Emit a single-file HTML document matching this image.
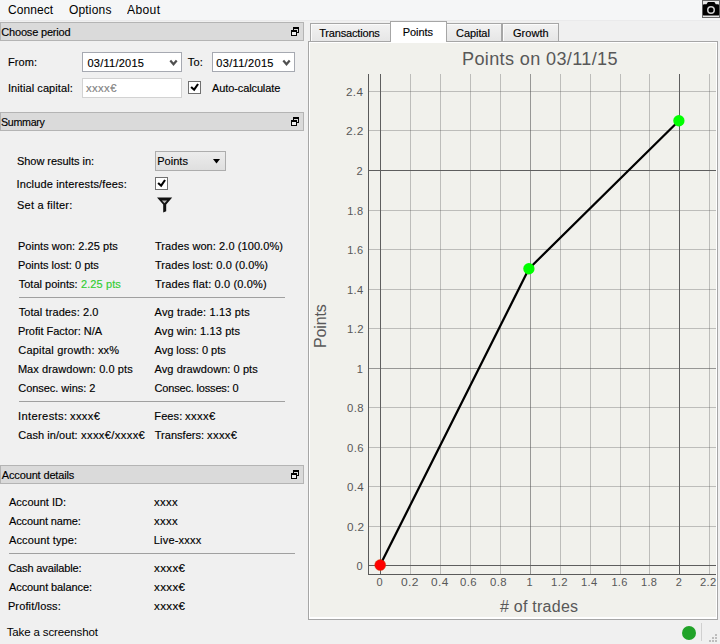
<!DOCTYPE html>
<html><head><meta charset="utf-8"><title>Trading report</title>
<style>
html,body{margin:0;padding:0;}
body{width:720px;height:644px;overflow:hidden;background:#f0f0f0;position:relative;font-family:"Liberation Sans", "DejaVu Sans", sans-serif;}
.t{position:absolute;white-space:pre;line-height:16px;font-family:"Liberation Sans", "DejaVu Sans", sans-serif;-webkit-text-stroke:0.15px;}
.n{-webkit-text-stroke:0;}
</style></head><body>
<div style="position:absolute;left:0px;top:0px;width:720px;height:20px;background:#f5f6f7;"></div>
<div style="position:absolute;left:0px;top:20px;width:720px;height:1px;background:#eaeaeb;"></div>
<svg style="position:absolute;left:702px;top:0" width="18" height="18" viewBox="0 0 18 18">
<rect x="0.5" y="0.5" width="17" height="17" fill="#e6e6e6" stroke="#666"/>
<path d="M0.9 5.4 Q0.9 4.2 2.1 4.2 H4.5 L5.9 2.1 H12.4 L13.8 4.2 H15.9 Q17.1 4.2 17.1 5.4 V14.4 Q17.1 15.6 15.9 15.6 H2.1 Q0.9 15.6 0.9 14.4 Z" fill="#000"/>
<circle cx="9" cy="10" r="3.25" fill="none" stroke="#d0d0d0" stroke-width="1.5"/>
</svg>
<div style="position:absolute;left:0px;top:22px;width:304px;height:19px;box-sizing:border-box;background:#dadada;border:1px solid #b4b4b4;"></div>
<svg style="position:absolute;left:290px;top:26px" width="11" height="11" viewBox="0 0 11 11" shape-rendering="crispEdges">
<rect x="3" y="1" width="6" height="6" fill="#000"/>
<rect x="4" y="3" width="4" height="3" fill="#dadada"/>
<rect x="1" y="4" width="6" height="6" fill="#000"/>
<rect x="2" y="6" width="4" height="3" fill="#ececec"/>
</svg>
<div style="position:absolute;left:0px;top:112px;width:304px;height:19px;box-sizing:border-box;background:#dadada;border:1px solid #b4b4b4;"></div>
<svg style="position:absolute;left:290px;top:116px" width="11" height="11" viewBox="0 0 11 11" shape-rendering="crispEdges">
<rect x="3" y="1" width="6" height="6" fill="#000"/>
<rect x="4" y="3" width="4" height="3" fill="#dadada"/>
<rect x="1" y="4" width="6" height="6" fill="#000"/>
<rect x="2" y="6" width="4" height="3" fill="#ececec"/>
</svg>
<div style="position:absolute;left:0px;top:465px;width:304px;height:19px;box-sizing:border-box;background:#dadada;border:1px solid #b4b4b4;"></div>
<svg style="position:absolute;left:290px;top:469px" width="11" height="11" viewBox="0 0 11 11" shape-rendering="crispEdges">
<rect x="3" y="1" width="6" height="6" fill="#000"/>
<rect x="4" y="3" width="4" height="3" fill="#dadada"/>
<rect x="1" y="4" width="6" height="6" fill="#000"/>
<rect x="2" y="6" width="4" height="3" fill="#ececec"/>
</svg>
<div style="position:absolute;left:82px;top:52px;width:100px;height:20px;box-sizing:border-box;background:#fff;border:1px solid #a6a9b1;"></div>
<svg style="position:absolute;left:169px;top:59px" width="9" height="8" viewBox="0 0 9 8"><path d="M1.3 1.5 L4.5 5.2 L7.7 1.5" fill="none" stroke="#505050" stroke-width="2.2"/></svg>
<div style="position:absolute;left:212px;top:52px;width:83px;height:20px;box-sizing:border-box;background:#fff;border:1px solid #a6a9b1;"></div>
<svg style="position:absolute;left:282px;top:59px" width="9" height="8" viewBox="0 0 9 8"><path d="M1.3 1.5 L4.5 5.2 L7.7 1.5" fill="none" stroke="#505050" stroke-width="2.2"/></svg>
<div style="position:absolute;left:82px;top:78px;width:100px;height:20px;box-sizing:border-box;background:#fff;border:1px solid #d2d2d2;"></div>
<div style="position:absolute;left:188px;top:81px;width:13px;height:13px;box-sizing:border-box;background:#fff;border:1px solid #707070;"></div>
<svg style="position:absolute;left:188px;top:81px" width="13" height="13" viewBox="0 0 13 13"><path d="M3.1 5.9 L6.15 8.7 L10.05 3.0" fill="none" stroke="#000" stroke-width="2.1"/></svg>
<div style="position:absolute;left:155px;top:151px;width:71px;height:20px;box-sizing:border-box;background:linear-gradient(#ececec,#dfdfdf);border:1px solid #adadad;"></div>
<svg style="position:absolute;left:213px;top:159px" width="7" height="5" viewBox="0 0 7 5"><path d="M0 0 H7 L3.5 4.4 Z" fill="#000"/></svg>
<div style="position:absolute;left:155px;top:177px;width:13px;height:13px;box-sizing:border-box;background:#fff;border:1px solid #707070;"></div>
<svg style="position:absolute;left:155px;top:177px" width="13" height="13" viewBox="0 0 13 13"><path d="M3.1 5.9 L6.15 8.7 L10.05 3.0" fill="none" stroke="#000" stroke-width="2.1"/></svg>
<svg style="position:absolute;left:156px;top:196px" width="18" height="18" viewBox="0 0 18 18"><path d="M1 1.4 H16.2 L10.2 8.6 V15.2 L7.2 16.6 V8.6 Z" fill="#111"/><path d="M5.9 4.4 H11.1 L8.5 7.2 Z" fill="#b8b8b8"/></svg>
<div style="position:absolute;left:19px;top:297px;width:266px;height:1px;background:#a0a0a0;"></div>
<div style="position:absolute;left:19px;top:401px;width:266px;height:1px;background:#a0a0a0;"></div>
<div style="position:absolute;left:9px;top:553px;width:286px;height:1px;background:#a0a0a0;"></div>
<div style="position:absolute;left:682px;top:626px;width:14px;height:14px;background:#21a329;border-radius:50%;"></div>
<div style="position:absolute;left:701px;top:623px;width:1px;height:18px;background:#d0d0d0;"></div>
<div style="position:absolute;left:715px;top:634px;width:2px;height:2px;background:#bdbdbd;"></div>
<div style="position:absolute;left:712px;top:637px;width:2px;height:2px;background:#bdbdbd;"></div>
<div style="position:absolute;left:715px;top:637px;width:2px;height:2px;background:#bdbdbd;"></div>
<div style="position:absolute;left:709px;top:640px;width:2px;height:2px;background:#bdbdbd;"></div>
<div style="position:absolute;left:712px;top:640px;width:2px;height:2px;background:#bdbdbd;"></div>
<div style="position:absolute;left:715px;top:640px;width:2px;height:2px;background:#bdbdbd;"></div>
<div style="position:absolute;left:308px;top:41px;width:410px;height:579px;box-sizing:border-box;background:#f1f1ec;border:1px solid #a6a6a6;box-shadow:inset 1px 1px 0 #fff, inset -1px -2px 0 #fff;"></div>
<div style="position:absolute;left:310px;top:23px;width:82px;height:18px;box-sizing:border-box;background:linear-gradient(#f2f2f2,#e6e6e6);border:1px solid #a6a6a6;border-bottom:none;box-shadow:inset 1px 1px 0 #fbfbfb;"></div>
<div style="position:absolute;left:445px;top:23px;width:57px;height:18px;box-sizing:border-box;background:linear-gradient(#f2f2f2,#e6e6e6);border:1px solid #a6a6a6;border-bottom:none;box-shadow:inset 1px 1px 0 #fbfbfb;"></div>
<div style="position:absolute;left:502px;top:23px;width:57px;height:18px;box-sizing:border-box;background:linear-gradient(#f2f2f2,#e6e6e6);border:1px solid #a6a6a6;border-bottom:none;box-shadow:inset 1px 1px 0 #fbfbfb;"></div>
<div style="position:absolute;left:390px;top:21px;width:57px;height:20px;box-sizing:border-box;background:#fff;border:1px solid #a6a6a6;border-bottom:none;"></div>
<div style="position:absolute;left:391px;top:41px;width:55px;height:1px;background:#fff;"></div>
<svg style="position:absolute;left:0;top:0" width="720" height="644" viewBox="0 0 720 644">
<g shape-rendering="crispEdges" stroke-width="1">
<line x1="410.5" y1="74" x2="410.5" y2="575" stroke="#505050" stroke-opacity="0.32"/>
<line x1="440.5" y1="74" x2="440.5" y2="575" stroke="#505050" stroke-opacity="0.32"/>
<line x1="470.5" y1="74" x2="470.5" y2="575" stroke="#505050" stroke-opacity="0.32"/>
<line x1="500.5" y1="74" x2="500.5" y2="575" stroke="#505050" stroke-opacity="0.32"/>
<line x1="530.5" y1="74" x2="530.5" y2="575" stroke="#505050" stroke-opacity="0.56"/>
<line x1="560.5" y1="74" x2="560.5" y2="575" stroke="#505050" stroke-opacity="0.32"/>
<line x1="590.5" y1="74" x2="590.5" y2="575" stroke="#505050" stroke-opacity="0.32"/>
<line x1="620.5" y1="74" x2="620.5" y2="575" stroke="#505050" stroke-opacity="0.32"/>
<line x1="649.5" y1="74" x2="649.5" y2="575" stroke="#505050" stroke-opacity="0.32"/>
<line x1="709.5" y1="74" x2="709.5" y2="575" stroke="#505050" stroke-opacity="0.32"/>
<line x1="368" y1="526.5" x2="716" y2="526.5" stroke="#505050" stroke-opacity="0.32"/>
<line x1="368" y1="486.5" x2="716" y2="486.5" stroke="#505050" stroke-opacity="0.32"/>
<line x1="368" y1="447.5" x2="716" y2="447.5" stroke="#505050" stroke-opacity="0.32"/>
<line x1="368" y1="407.5" x2="716" y2="407.5" stroke="#505050" stroke-opacity="0.32"/>
<line x1="368" y1="368.5" x2="716" y2="368.5" stroke="#505050" stroke-opacity="0.56"/>
<line x1="368" y1="328.5" x2="716" y2="328.5" stroke="#505050" stroke-opacity="0.32"/>
<line x1="368" y1="289.5" x2="716" y2="289.5" stroke="#505050" stroke-opacity="0.32"/>
<line x1="368" y1="249.5" x2="716" y2="249.5" stroke="#505050" stroke-opacity="0.32"/>
<line x1="368" y1="210.5" x2="716" y2="210.5" stroke="#505050" stroke-opacity="0.32"/>
<line x1="368" y1="130.5" x2="716" y2="130.5" stroke="#505050" stroke-opacity="0.32"/>
<line x1="368" y1="91.5" x2="716" y2="91.5" stroke="#505050" stroke-opacity="0.32"/>
<line x1="380.5" y1="74" x2="380.5" y2="575" stroke="#5e5e5e"/>
<line x1="368" y1="565.5" x2="716" y2="565.5" stroke="#5e5e5e"/>
<line x1="679.5" y1="74" x2="679.5" y2="575" stroke="#5e5e5e"/>
<line x1="368" y1="170.5" x2="716" y2="170.5" stroke="#5e5e5e"/>
<line x1="368.5" y1="74" x2="368.5" y2="575" stroke="#5a5a5a"/>
<line x1="368" y1="574.5" x2="716" y2="574.5" stroke="#5a5a5a"/>
</g>
<polyline points="380.2,565.05 528.9,268.75 678.9,120.75" fill="none" stroke="#000" stroke-width="2.25" stroke-linejoin="round"/>
<circle cx="380.2" cy="565.05" r="5.5" fill="#f00" stroke="#c04000" stroke-width="0.4"/>
<circle cx="528.9" cy="268.75" r="5.65" fill="#0f0"/>
<circle cx="678.9" cy="120.75" r="5.65" fill="#0f0"/>
</svg>
<div class="t n" style="left:7.88px;top:1.84px;font-size:12px;color:#000;line-height:16px;letter-spacing:0.100px;">Connect</div>
<div class="t n" style="left:68.88px;top:1.84px;font-size:12px;color:#000;line-height:16px;letter-spacing:0.208px;">Options</div>
<div class="t n" style="left:127.20px;top:1.84px;font-size:12px;color:#000;line-height:16px;letter-spacing:0.350px;transform-origin:0 0;transform:scaleX(1.0077);">About</div>
<div class="t" style="left:1.25px;top:24.19px;font-size:11px;color:#000;line-height:16px;letter-spacing:-0.177px;">Choose period</div>
<div class="t" style="left:1.11px;top:114.19px;font-size:11px;color:#000;line-height:16px;letter-spacing:-0.300px;transform-origin:0 0;transform:scaleX(0.9709);">Summary</div>
<div class="t" style="left:1.80px;top:467.19px;font-size:11px;color:#000;line-height:16px;letter-spacing:-0.146px;">Account details</div>
<div class="t" style="left:8.03px;top:54.19px;font-size:11px;color:#000;line-height:16px;letter-spacing:0.081px;">From:</div>
<div class="t" style="left:187.85px;top:54.19px;font-size:11px;color:#000;line-height:16px;letter-spacing:0.112px;">To:</div>
<div class="t" style="left:87.42px;top:55.19px;font-size:11px;color:#000;line-height:16px;letter-spacing:0.258px;">03/11/2015</div>
<div class="t" style="left:216.22px;top:55.19px;font-size:11px;color:#000;line-height:16px;letter-spacing:0.336px;">03/11/2015</div>
<div class="t" style="left:7.90px;top:80.19px;font-size:11px;color:#000;line-height:16px;letter-spacing:0.085px;">Initial capital:</div>
<div class="t" style="left:85.67px;top:80.19px;font-size:11px;color:#838383;line-height:16px;letter-spacing:0.350px;transform-origin:0 0;transform:scaleX(1.0316);">xxxx€</div>
<div class="t" style="left:212.10px;top:80.19px;font-size:11px;color:#000;line-height:16px;letter-spacing:-0.119px;">Auto-calculate</div>
<div class="t" style="left:17.00px;top:153.19px;font-size:11px;color:#000;line-height:16px;letter-spacing:-0.042px;">Show results in:</div>
<div class="t" style="left:157.22px;top:153.19px;font-size:11px;color:#000;line-height:16px;letter-spacing:0.030px;">Points</div>
<div class="t" style="left:16.50px;top:176.19px;font-size:11px;color:#000;line-height:16px;letter-spacing:0.148px;">Include interests/fees:</div>
<div class="t" style="left:17.00px;top:197.19px;font-size:11px;color:#000;line-height:16px;letter-spacing:0.219px;">Set a filter:</div>
<div class="t" style="left:17.88px;top:238.19px;font-size:11px;color:#000;line-height:16px;letter-spacing:0.042px;">Points won: 2.25 pts</div>
<div class="t" style="left:154.95px;top:238.19px;font-size:11px;color:#000;line-height:16px;letter-spacing:0.080px;">Trades won: 2.0 (100.0%)</div>
<div class="t" style="left:17.88px;top:257.19px;font-size:11px;color:#000;line-height:16px;letter-spacing:0.015px;">Points lost: 0 pts</div>
<div class="t" style="left:154.95px;top:257.19px;font-size:11px;color:#000;line-height:16px;letter-spacing:0.101px;">Trades lost: 0.0 (0.0%)</div>
<div class="t" style="left:18.65px;top:276.19px;font-size:11px;color:#000;line-height:16px;letter-spacing:0.025px;">Total points: </div>
<div class="t" style="left:81.00px;top:276.19px;font-size:11px;color:#32cd32;line-height:16px;letter-spacing:0.093px;">2.25 pts</div>
<div class="t" style="left:154.95px;top:276.19px;font-size:11px;color:#000;line-height:16px;letter-spacing:0.150px;">Trades flat: 0.0 (0.0%)</div>
<div class="t" style="left:18.65px;top:304.19px;font-size:11px;color:#000;line-height:16px;letter-spacing:0.098px;">Total trades: 2.0</div>
<div class="t" style="left:154.60px;top:304.19px;font-size:11px;color:#000;line-height:16px;letter-spacing:0.169px;">Avg trade: 1.13 pts</div>
<div class="t" style="left:17.88px;top:323.19px;font-size:11px;color:#000;line-height:16px;letter-spacing:-0.009px;">Profit Factor: N/A</div>
<div class="t" style="left:154.60px;top:323.19px;font-size:11px;color:#000;line-height:16px;letter-spacing:0.117px;">Avg win: 1.13 pts</div>
<div class="t" style="left:18.25px;top:342.19px;font-size:11px;color:#000;line-height:16px;letter-spacing:0.201px;">Capital growth: xx%</div>
<div class="t" style="left:154.60px;top:342.19px;font-size:11px;color:#000;line-height:16px;letter-spacing:-0.014px;">Avg loss: 0 pts</div>
<div class="t" style="left:17.88px;top:361.19px;font-size:11px;color:#000;line-height:16px;letter-spacing:0.084px;">Max drawdown: 0.0 pts</div>
<div class="t" style="left:154.60px;top:361.19px;font-size:11px;color:#000;line-height:16px;letter-spacing:0.067px;">Avg drawdown: 0 pts</div>
<div class="t" style="left:18.25px;top:380.19px;font-size:11px;color:#000;line-height:16px;letter-spacing:-0.041px;">Consec. wins: 2</div>
<div class="t" style="left:154.50px;top:380.19px;font-size:11px;color:#000;line-height:16px;letter-spacing:-0.173px;">Consec. losses: 0</div>
<div class="t" style="left:17.74px;top:408.19px;font-size:11px;color:#000;line-height:16px;letter-spacing:0.350px;transform-origin:0 0;transform:scaleX(1.0140);">Interests:</div>
<div class="t" style="left:70.27px;top:408.19px;font-size:11px;color:#000;line-height:16px;letter-spacing:0.350px;transform-origin:0 0;transform:scaleX(1.0111);">xxxx€</div>
<div class="t" style="left:154.32px;top:408.19px;font-size:11px;color:#000;line-height:16px;letter-spacing:0.106px;">Fees:</div>
<div class="t" style="left:184.87px;top:408.19px;font-size:11px;color:#000;line-height:16px;letter-spacing:0.350px;transform-origin:0 0;transform:scaleX(1.0248);">xxxx€</div>
<div class="t" style="left:18.25px;top:427.19px;font-size:11px;color:#000;line-height:16px;letter-spacing:0.064px;">Cash in/out:</div>
<div class="t" style="left:81.37px;top:427.19px;font-size:11px;color:#000;line-height:16px;letter-spacing:0.350px;transform-origin:0 0;transform:scaleX(1.0160);">xxxx€/xxxx€</div>
<div class="t" style="left:154.75px;top:427.19px;font-size:11px;color:#000;line-height:16px;letter-spacing:0.025px;">Transfers:</div>
<div class="t" style="left:207.17px;top:427.19px;font-size:11px;color:#000;line-height:16px;letter-spacing:0.350px;transform-origin:0 0;transform:scaleX(1.0179);">xxxx€</div>
<div class="t" style="left:9.00px;top:494.19px;font-size:11px;color:#000;line-height:16px;letter-spacing:0.013px;">Account ID:</div>
<div class="t" style="left:154.47px;top:494.19px;font-size:11px;color:#000;line-height:16px;letter-spacing:0.350px;transform-origin:0 0;transform:scaleX(1.0307);">xxxx</div>
<div class="t" style="left:9.00px;top:513.19px;font-size:11px;color:#000;line-height:16px;letter-spacing:-0.131px;">Account name:</div>
<div class="t" style="left:154.47px;top:513.19px;font-size:11px;color:#000;line-height:16px;letter-spacing:0.350px;transform-origin:0 0;transform:scaleX(1.0307);">xxxx</div>
<div class="t" style="left:9.00px;top:532.19px;font-size:11px;color:#000;line-height:16px;letter-spacing:0.115px;">Account type:</div>
<div class="t" style="left:153.72px;top:532.19px;font-size:11px;color:#000;line-height:16px;letter-spacing:0.206px;">Live-xxxx</div>
<div class="t" style="left:8.25px;top:560.19px;font-size:11px;color:#000;line-height:16px;letter-spacing:-0.136px;">Cash available:</div>
<div class="t" style="left:154.47px;top:560.19px;font-size:11px;color:#000;line-height:16px;letter-spacing:0.350px;transform-origin:0 0;transform:scaleX(1.0521);">xxxx€</div>
<div class="t" style="left:9.00px;top:579.19px;font-size:11px;color:#000;line-height:16px;letter-spacing:-0.092px;">Account balance:</div>
<div class="t" style="left:154.47px;top:579.19px;font-size:11px;color:#000;line-height:16px;letter-spacing:0.350px;transform-origin:0 0;transform:scaleX(1.0521);">xxxx€</div>
<div class="t" style="left:7.88px;top:598.19px;font-size:11px;color:#000;line-height:16px;letter-spacing:0.141px;">Profit/loss:</div>
<div class="t" style="left:154.47px;top:598.19px;font-size:11px;color:#000;line-height:16px;letter-spacing:0.350px;transform-origin:0 0;transform:scaleX(1.0521);">xxxx€</div>
<div class="t n" style="left:6.65px;top:624.02px;font-size:11.5px;color:#000;line-height:16px;letter-spacing:-0.125px;">Take a screenshot</div>
<div class="t" style="left:319.15px;top:25.19px;font-size:11px;color:#000;line-height:16px;letter-spacing:-0.170px;">Transactions</div>
<div class="t" style="left:402.73px;top:24.19px;font-size:11px;color:#000;line-height:16px;letter-spacing:-0.070px;">Points</div>
<div class="t" style="left:456.10px;top:25.19px;font-size:11px;color:#000;line-height:16px;letter-spacing:-0.083px;">Capital</div>
<div class="t" style="left:513.00px;top:25.19px;font-size:11px;color:#000;line-height:16px;letter-spacing:0.050px;">Growth</div>
<div class="t n" style="left:462.24px;top:46.76px;font-size:18px;color:#585858;line-height:24px;letter-spacing:0.350px;transform-origin:0 0;transform:scaleX(1.0052);">Points on 03/11/15</div>
<div class="t n" style="left:499.88px;top:594.96px;font-size:16px;color:#585858;line-height:24px;letter-spacing:0.263px;"># of trades</div>
<div class="t n" style="left:376.52px;top:574.19px;font-size:11px;color:#585858;line-height:16px;">0</div>
<div class="t n" style="left:401.19px;top:574.19px;font-size:11px;color:#585858;line-height:16px;letter-spacing:0.350px;transform-origin:0 0;transform:scaleX(1.0945);">0.2</div>
<div class="t n" style="left:431.20px;top:574.19px;font-size:11px;color:#585858;line-height:16px;letter-spacing:0.350px;transform-origin:0 0;transform:scaleX(1.0767);">0.4</div>
<div class="t n" style="left:460.21px;top:574.19px;font-size:11px;color:#585858;line-height:16px;letter-spacing:0.350px;transform-origin:0 0;transform:scaleX(1.0296);">0.6</div>
<div class="t n" style="left:490.21px;top:574.19px;font-size:11px;color:#585858;line-height:16px;letter-spacing:0.350px;transform-origin:0 0;transform:scaleX(1.0296);">0.8</div>
<div class="t n" style="left:526.38px;top:574.19px;font-size:11px;color:#585858;line-height:16px;">1</div>
<div class="t n" style="left:551.35px;top:574.19px;font-size:11px;color:#585858;line-height:16px;letter-spacing:0.350px;transform-origin:0 0;transform:scaleX(1.0292);">1.2</div>
<div class="t n" style="left:581.36px;top:574.19px;font-size:11px;color:#585858;line-height:16px;letter-spacing:0.350px;transform-origin:0 0;transform:scaleX(1.0118);">1.4</div>
<div class="t n" style="left:611.38px;top:574.19px;font-size:11px;color:#585858;line-height:16px;letter-spacing:0.325px;">1.6</div>
<div class="t n" style="left:641.02px;top:574.19px;font-size:11px;color:#585858;line-height:16px;letter-spacing:0.300px;">1.8</div>
<div class="t n" style="left:675.75px;top:574.19px;font-size:11px;color:#585858;line-height:16px;">2</div>
<div class="t n" style="left:700.49px;top:574.19px;font-size:11px;color:#585858;line-height:16px;letter-spacing:0.350px;transform-origin:0 0;transform:scaleX(1.0201);">2.2</div>
<div class="t n" style="left:356.43px;top:558.19px;font-size:11px;color:#585858;line-height:16px;">0</div>
<div class="t n" style="left:346.60px;top:519.19px;font-size:11px;color:#585858;line-height:16px;letter-spacing:0.350px;transform-origin:0 0;transform:scaleX(1.0680);">0.2</div>
<div class="t n" style="left:346.61px;top:479.19px;font-size:11px;color:#585858;line-height:16px;letter-spacing:0.350px;transform-origin:0 0;transform:scaleX(1.0506);">0.4</div>
<div class="t n" style="left:346.61px;top:440.19px;font-size:11px;color:#585858;line-height:16px;letter-spacing:0.350px;transform-origin:0 0;transform:scaleX(1.0296);">0.6</div>
<div class="t n" style="left:346.61px;top:400.19px;font-size:11px;color:#585858;line-height:16px;letter-spacing:0.350px;transform-origin:0 0;transform:scaleX(1.0296);">0.8</div>
<div class="t n" style="left:356.73px;top:361.19px;font-size:11px;color:#585858;line-height:16px;">1</div>
<div class="t n" style="left:347.20px;top:321.19px;font-size:11px;color:#585858;line-height:16px;letter-spacing:0.350px;transform-origin:0 0;transform:scaleX(1.0292);">1.2</div>
<div class="t n" style="left:347.21px;top:282.19px;font-size:11px;color:#585858;line-height:16px;letter-spacing:0.350px;transform-origin:0 0;transform:scaleX(1.0118);">1.4</div>
<div class="t n" style="left:347.23px;top:242.19px;font-size:11px;color:#585858;line-height:16px;letter-spacing:0.275px;">1.6</div>
<div class="t n" style="left:347.23px;top:203.19px;font-size:11px;color:#585858;line-height:16px;letter-spacing:0.275px;">1.8</div>
<div class="t n" style="left:356.40px;top:163.19px;font-size:11px;color:#585858;line-height:16px;">2</div>
<div class="t n" style="left:346.46px;top:123.19px;font-size:11px;color:#585858;line-height:16px;letter-spacing:0.350px;transform-origin:0 0;transform:scaleX(1.0769);">2.2</div>
<div class="t n" style="left:346.47px;top:84.19px;font-size:11px;color:#585858;line-height:16px;letter-spacing:0.350px;transform-origin:0 0;transform:scaleX(1.0592);">2.4</div>
<div class="t n" style="left:308.66px;top:348.38px;font-size:16px;line-height:24px;color:#585858;letter-spacing:-0.140px;transform-origin:0 0;transform:rotate(-90deg);">Points</div>
</body></html>
